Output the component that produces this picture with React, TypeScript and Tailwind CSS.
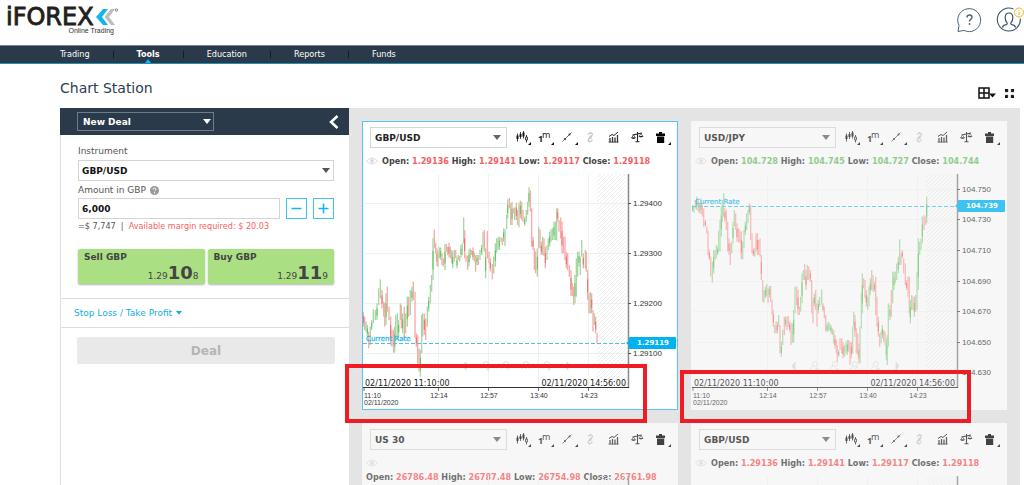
import React from "react";

type Tone = "up" | "down";

interface ChartSpec {
  candles: string;
  origin: [number, number];
  labels: { text: string; y: number }[];
  rate?: { text: string; y: number };
}

interface CardSpec {
  id: string;
  symbol: string;
  ohlc: [string, string, string, string];
  tone: Tone;
  active?: boolean;
  wrapped?: boolean;
  chart: ChartSpec;
  mark?: string;
}

// Each candle is "x high low direction", in thirds of a chart unit.
const GBP_CANDLES =
  "25 425 470 r;29 440 480 r;33 455 485 g;37 465 500 g;41 485 535 r;46 470 525 g;50 450 480 g;55 418 460 g;61 420 450 g;66 400 450 g;71 355 405 g;76 328 385 g;81 360 415 r;86 395 440 r;89 400 470 r;93 370 465 g;97 350 425 r;102 410 450 r;107 440 525 r;111 480 530 r;116 480 548 r;119 470 548 g;122 435 500 g;127 430 510 g;131 450 500 g;136 400 450 g;139 405 475 r;143 430 490 g;148 410 510 r;152 430 490 g;157 380 470 g;161 380 440 r;166 360 435 g;171 350 395 g;175 335 390 r;180 365 505 r;184 490 530 r;188 495 580 r;192 535 605 r;196 540 620 g;200 435 550 g;203 430 500 g;208 430 495 r;212 445 510 r;217 410 470 g;221 380 425 g;226 345 400 g;230 315 365 g;234 205 330 g;238 178 235 r;242 218 250 r;246 235 288 r;249 245 290 g;253 232 265 g;257 232 270 g;261 250 285 r;265 265 290 r;270 222 300 g;274 222 245 r;278 230 255 r;282 218 262 r;286 230 265 g;290 240 280 r;293 245 295 g;298 240 275 g;302 240 265 r;306 260 295 g;310 255 270 r;314 258 275 g;318 225 262 g;322 220 255 g;326 142 220 g;329 180 265 r;333 255 275 r;338 258 300 r;342 238 290 g;346 235 265 g;350 240 255 r;354 232 270 r;358 248 275 g;362 255 305 r;366 255 285 g;370 255 285 r;375 240 270 g;380 225 255 g;384 185 235 g;388 180 245 r;392 235 325 g;397 183 265 r;402 245 280 r;406 265 305 r;412 282 328 r;416 260 310 g;421 220 290 g;425 205 248 g;429 202 240 g;433 200 240 g;438 202 215 r;442 205 225 r;446 175 215 g;450 178 228 g;455 135 178 g;458 88 145 g;463 84 115 r;467 100 165 r;471 95 165 g;475 115 130 r;479 112 150 g;484 98 150 r;488 120 165 r;492 98 172 g;496 92 145 g;500 95 150 r;504 120 155 r;509 140 168 g;514 120 155 g;518 95 135 g;522 52 110 g;526 60 125 r;530 115 230 r;534 200 240 r;538 235 300 r;542 245 310 r;547 235 320 g;551 170 235 g;555 178 235 r;559 215 255 r;563 200 255 g;567 205 258 r;571 230 295 r;576 225 270 g;580 205 240 g;584 185 230 g;588 178 215 g;592 175 210 g;597 155 210 g;601 155 210 g;605 115 212 g;608 115 155 r;612 150 185 r;617 143 205 r;621 155 250 r;625 200 250 r;630 200 270 r;634 245 295 r;638 250 300 r;643 285 320 r;648 300 378 r;652 340 378 r;656 350 405 r;660 315 400 g;664 265 380 g;668 245 320 g;672 245 290 g;676 260 315 g;680 210 260 g;685 250 295 r;691 240 295 g;694 245 305 r;698 300 390 r;702 370 430 r;706 365 430 g;710 370 430 r;714 420 485 r;718 430 465 g;722 440 490 r;726 490 520 r";

const JPY_CANDLES =
  "38 -15 5 g;42 -10 8 g;46 -30 -5 g;50 -40 0 g;55 -30 5 r;59 -20 10 r;63 -35 12 g;67 -15 20 r;71 -5 50 r;76 30 50 r;80 50 70 r;84 62 135 r;88 118 150 r;92 140 200 r;97 155 218 g;101 120 190 g;105 120 150 g;109 105 145 g;113 110 135 g;116 62 125 g;120 30 125 g;124 -10 80 g;127 -30 35 g;131 -50 20 g;135 -5 35 r;139 0 60 r;143 35 125 r;147 85 135 r;151 100 165 r;155 95 130 g;159 35 100 g;163 0 50 g;167 10 60 r;171 40 95 r;176 55 98 r;180 62 98 r;184 65 148 r;188 95 148 g;192 60 115 g;196 35 75 g;200 10 60 g;204 0 40 g;208 -20 15 g;212 -15 90 r;216 70 130 r;220 115 138 r;224 115 140 g;228 70 125 r;232 70 135 r;236 90 135 r;240 85 140 r;244 135 210 r;248 210 275 r;252 240 278 g;256 230 265 g;260 222 260 g;264 235 278 r;268 228 262 g;272 228 275 r;276 270 315 r;280 300 350 r;284 345 370 r;288 335 370 g;292 335 370 r;296 315 350 g;300 345 430 r;304 395 440 g;308 360 405 g;313 320 375 r;317 320 350 g;321 320 360 r;325 318 350 r;329 335 365 r;333 340 405 r;337 340 398 g;341 300 398 g;345 230 310 g;350 230 285 r;354 240 315 r;358 290 315 r;362 260 305 g;366 190 280 g;370 180 210 g;374 162 210 r;378 180 240 r;382 165 210 g;386 170 210 r;391 180 215 r;395 210 310 r;399 265 340 r;403 250 290 g;407 240 300 r;411 280 350 r;415 270 310 g;419 260 290 g;425 238 285 g;429 280 305 r;433 290 325 r;437 315 365 r;441 340 365 g;445 335 365 g;449 340 360 g;453 345 370 g;457 355 375 r;461 360 400 g;465 375 415 r;469 390 430 r;472 405 455 r;476 420 440 g;480 385 420 r;485 385 430 r;489 395 445 r;494 405 440 g;498 395 430 g;502 390 435 g;506 390 425 r;510 395 465 r;514 395 445 r;518 350 430 g;521 305 350 g;525 315 380 r;529 355 430 r;533 370 435 r;537 400 460 r;540 350 460 g;544 250 355 g;547 190 310 g;551 205 235 r;555 210 265 r;559 240 290 r;563 260 300 g;567 230 290 g;571 205 255 g;575 180 240 r;579 195 245 g;583 215 245 r;587 200 315 r;591 260 350 r;595 320 380 r;599 370 410 r;603 365 400 g;607 345 385 g;611 360 395 r;615 365 405 r;619 385 450 g;622 375 465 g;625 280 410 g;630 285 330 g;634 240 320 r;638 185 280 g;642 185 240 g;646 185 220 g;650 160 210 g;655 140 190 g;659 88 165 g;663 130 165 r;667 120 145 r;671 145 190 r;676 160 225 r;680 210 240 r;684 200 260 r;688 200 310 r;691 270 340 g;695 255 300 g;699 260 300 r;703 260 320 g;707 255 305 r;711 185 300 g;715 85 240 g;719 95 135 g;723 85 120 g;727 20 100 g;732 15 60 r;736 20 45 r;740 -40 40 g";

const GBP_LABELS = [
  { text: "1.29400", y: 35 },
  { text: "1.29300", y: 85 },
  { text: "1.29200", y: 135 },
  { text: "1.29100", y: 185 },
];

const CARDS: CardSpec[] = [
  {
    id: "gbpusd-1",
    symbol: "GBP/USD",
    ohlc: ["1.29136", "1.29141", "1.29117", "1.29118"],
    tone: "down",
    active: true,
    chart: {
      candles: GBP_CANDLES,
      origin: [-8, 2],
      labels: GBP_LABELS,
      rate: { text: "1.29119", y: 175 },
    },
    mark: "-left-[18px] top-[242px] h-[59px] w-[302px]",
  },
  {
    id: "usdjpy",
    symbol: "USD/JPY",
    ohlc: ["104.728", "104.745", "104.727", "104.744"],
    tone: "up",
    chart: {
      candles: JPY_CANDLES,
      origin: [-12, 42],
      labels: [
        { text: "104.750", y: 21 },
        { text: "104.730", y: 51 },
        { text: "104.710", y: 82 },
        { text: "104.690", y: 113 },
        { text: "104.670", y: 143 },
        { text: "104.650", y: 174 },
        { text: "104.630", y: 204 },
      ],
      rate: { text: "104.739", y: 38 },
    },
    mark: "-left-[12px] top-[248px] h-[53px] w-[291px]",
  },
  {
    id: "us30",
    symbol: "US 30",
    ohlc: ["26786.48", "26787.48", "26754.98", "26761.98"],
    tone: "down",
    wrapped: true,
    chart: { candles: "", origin: [0, 0], labels: [] },
  },
  {
    id: "gbpusd-2",
    symbol: "GBP/USD",
    ohlc: ["1.29136", "1.29141", "1.29117", "1.29118"],
    tone: "down",
    chart: { candles: GBP_CANDLES, origin: [-8, 2], labels: GBP_LABELS },
  },
];

function Caret({ className }: { className: string }) {
  return (
    <svg viewBox="0 0 8 5" className={className} aria-hidden="true">
      <path d="M0 0h8L4 5z" fill="currentColor" />
    </svg>
  );
}

function Corner({ x }: { x: number }) {
  return <path d={`M${x + 2} 15v3h-3z`} fill="#111" />;
}

const TOOLS: { name: string; art: React.ReactNode }[] = [
  {
    name: "Chart type",
    art: (
      <>
        <path
          d="M6.5 6.500v8M9.500 5v7M12.500 4v7.500M15.500 8v7.500"
          stroke="#111"
          strokeWidth="0.800"
        />
        <path d="M5.500 8.500h2v3.500h-2zM8.500 7h2v3h-2zM11.500 5.500h2v4h-2z" fill="#111" />
        <path d="M14.600 10h1.800v3h-1.800z" fill="#fff" stroke="#111" strokeWidth="0.800" />
        <Corner x={18} />
      </>
    ),
  },
  {
    name: "Timeframe",
    art: (
      <>
        <text x="4" y="15" fontSize="9" fontWeight="700" fill="#222" fontFamily="Noto Sans, sans-serif">
          1
        </text>
        <text x="8" y="11" fontSize="9" fill="#222" fontFamily="Noto Sans, sans-serif">
          m
        </text>
        <Corner x={18} />
      </>
    ),
  },
  {
    name: "Draw line",
    art: (
      <>
        <path d="M5.500 14.500l9-9" stroke="#444" strokeWidth="0.800" />
        <circle cx="8" cy="12" r="1" fill="#333" />
        <circle cx="12.500" cy="7.500" r="1" fill="#333" />
        <Corner x={19} />
      </>
    ),
  },
  {
    name: "Link",
    art: (
      <g fill="none" stroke="#c4c4c4" strokeWidth="1.200">
        <path d="M8 7.500l2.500-2 2 1.500-1 2.500-2.500 1" />
        <path d="M12 11l-3 .500-1 2 1.500 1.500L12.500 13" />
        <path d="M9 11.500l2.500-3" />
      </g>
    ),
  },
  {
    name: "Indicators",
    art: (
      <>
        <path d="M6 9.500l3-2 2 1 4-3.500" fill="none" stroke="#222" strokeWidth="1" />
        <path d="M7 11v4.500M9.500 10v5.500M12 10.500v5M14.500 8v7.500" stroke="#333" strokeWidth="1.300" />
        <path d="M5.500 15h10" stroke="#333" strokeWidth="0.800" />
      </>
    ),
  },
  {
    name: "Compare",
    art: (
      <>
        <path d="M6.500 8l9.500-2M11.500 5v9.500M9.500 14.800h4" stroke="#222" strokeWidth="1.100" fill="none" />
        <path d="M7.500 8l-2 3h4zM15 6.500l-2 3h4z" fill="none" stroke="#333" strokeWidth="0.700" />
        <path d="M5.300 10.500h4.400q-2.200 2.800-4.400 0zM12.800 9h4.400q-2.200 2.800-4.400 0z" fill="#222" />
      </>
    ),
  },
  {
    name: "Delete",
    art: (
      <>
        <path d="M7 6.500h3v-1.500h3v1.500h3v2.500h-9zM8 9.500h7.200v6.500h-7.200z" fill="#050505" />
        <Corner x={20} />
      </>
    ),
  },
];

function Zoomer({ x, sign }: { x: number; sign: string }) {
  return (
    <g>
      <circle cx={x + 1} cy="196" r="2.500" />
      <path d={`M${x - 1} 198l-3 3`} />
      <path d={sign} transform={`translate(${x + 3} 201)`} />
    </g>
  );
}

function PriceChart({ spec, id }: { spec: ChartSpec; id: string }) {
  const bars = spec.candles ? spec.candles.split(";").map((c) => c.split(" ")) : [];
  return (
    <svg viewBox="0 0 314 241" className="block w-full" role="img" aria-label="Price chart">
      <defs>
        <pattern id={`hatch-${id}`} width="4" height="4" patternUnits="userSpaceOnUse">
          <path d="M-1 5L5 -1M-1 1L1 -1M3 5L5 3" stroke="#e8e8e8" strokeWidth="0.800" />
        </pattern>
      </defs>
      <rect x="234" y="6" width="31" height="213" fill={`url(#hatch-${id})`} />
      <g stroke="#f0f0f0">
        {[75.5, 125.5, 175.5, 225.5].map((x) => (
          <path key={x} d={`M${x} 6V219`} />
        ))}
        {spec.labels.map((l) => (
          <path key={l.y} d={`M1 ${l.y + 0.5}H265`} />
        ))}
      </g>
      <g fill="none" stroke="#d8d8d8" strokeWidth="0.800">
        <path d="M103 194l-3 4 3 4zM204 194l3 4-3 4z" fill="#d8d8d8" />
        <Zoomer x={122} sign="M-2 0h4M0 -2v4" />
        <Zoomer x={142} sign="M-2 0h4" />
        <Zoomer x={162} sign="M-2 0l2-2 2 2" />
        <Zoomer x={183} sign="M-2 0h4M0 -2v4" />
      </g>
      <g transform={`translate(${spec.origin[0]} ${spec.origin[1]}) scale(0.33333)`}>
        {bars.map(([x, top, bottom, dir], i) => {
          const t = Number(top);
          const h = Number(bottom) - t;
          const up = dir === "g";
          return (
            <g key={i}>
              <rect x={Number(x) - 2} y={t} width="4" height={h} fill={up ? "#a5d8a3" : "#fba9a9"} />
              {i % 3 === 0 && (
                <rect
                  x={Number(x) - 1.5}
                  y={t + h * 0.3}
                  width="3"
                  height={h * 0.45}
                  fill={up ? "#5fbf5c" : "#f06a66"}
                />
              )}
            </g>
          );
        })}
      </g>
      <path d="M265.500 6V220" stroke="#8a8a8a" strokeWidth="1.500" />
      <path d="M0 219.500H266" stroke="#333" />
      <path d="M1 220v3M75.500 220v3M125.500 220v3M175.500 220v3M225.500 220v3" stroke="#777" />
      <g fontFamily="Liberation Sans, sans-serif" fontSize="8" fill="#333">
        {spec.labels.map((l) => (
          <g key={l.text}>
            <path d={`M265 ${l.y + 0.5}h3`} stroke="#555" />
            <text x="270" y={l.y + 3}>
              {l.text}
            </text>
          </g>
        ))}
      </g>
      <g fontFamily="Liberation Sans, sans-serif" fontSize="7" fill="#333">
        <text x="1" y="230">11:10</text>
        <text x="1" y="237">02/11/2020</text>
        <g textAnchor="middle">
          <text x="76" y="230">12:14</text>
          <text x="126" y="230">12:57</text>
          <text x="176" y="230">13:40</text>
          <text x="226" y="230">14:23</text>
        </g>
      </g>
      <g fontFamily="DejaVu Sans, sans-serif" fontSize="8" fill="#222">
        <text x="2" y="218">02/11/2020 11:10:00</text>
        <text x="263" y="218" textAnchor="end">
          02/11/2020 14:56:00
        </text>
      </g>
      {spec.rate && (
        <g fontFamily="DejaVu Sans, sans-serif">
          <path d={`M0 ${spec.rate.y + 0.5}H265`} stroke="#4fc0e0" strokeDasharray="4 2" />
          <text x="3" y={spec.rate.y - 2} fontSize="7" fill="#12b3e6" stroke="#12b3e6" strokeWidth="0.200">
            Current Rate
          </text>
          <path d={`M263 ${spec.rate.y}l4-3v6z`} fill="#00b2f0" />
          <rect x="266" y={spec.rate.y - 6} width="47" height="12" rx="1" fill="#00b2f0" />
          <text x="290" y={spec.rate.y + 2} fontSize="7" fontWeight="700" fill="#fff" textAnchor="middle">
            {spec.rate.text}
          </text>
        </g>
      )}
    </svg>
  );
}

function ChartCard({ card }: { card: CardSpec }) {
  const names = ["Open", "High", "Low", "Close"];
  return (
    <section
      aria-label={card.symbol}
      className={`relative border ${card.active ? "border-[#55c8ee] bg-white" : "border-[#f7f7f7] bg-[#f7f7f7]"}`}
    >
      <div className={card.active ? "pt-[5px]" : "pt-[5px] opacity-75"}>
        <div className="flex items-center gap-1 pr-[5px] pl-[7px]">
          <div className="grid min-w-0 flex-1 items-center">
            <select
              aria-label="Chart instrument"
              defaultValue={card.symbol}
              className="col-start-1 row-start-1 h-[21px] w-full appearance-none border border-[#d4d4d4] bg-transparent px-1 text-[9px] leading-[12px] font-bold text-[#222]"
            >
              <option>{card.symbol}</option>
            </select>
            <Caret className="pointer-events-none col-start-1 row-start-1 mr-[6px] w-2 justify-self-end text-[#666]" />
          </div>
          <div className="flex shrink-0">
            {TOOLS.map((tool) => (
              <button key={tool.name} type="button" aria-label={tool.name} className="h-[21px] w-[23px]">
                <svg viewBox="0 0 23 21" className="block size-full">
                  {tool.art}
                </svg>
              </button>
            ))}
          </div>
        </div>
        <div
          className={`mt-[6px] flex items-center gap-x-1 pl-[3px] font-['DejaVu_Sans_Condensed','DejaVu_Sans',sans-serif] text-[9px] leading-[14px] font-bold whitespace-nowrap text-[#444] ${card.wrapped ? "-mb-[14px] flex-wrap" : ""}`}
        >
          <svg viewBox="0 -3 12 14" className="h-[14px] w-3 shrink-0" aria-hidden="true">
            <path d="M0.500 4Q6 -2 11.500 4Q6 10 0.500 4z" fill="none" stroke="#dcdcdc" />
            <circle cx="6" cy="4" r="2" fill="#dcdcdc" />
          </svg>
          <p className={card.wrapped ? "w-full" : ""}>
            {names.map((name, i) => (
              <React.Fragment key={name}>
                {name}:{" "}
                <span className={card.tone === "up" ? "text-[#6dc068]" : "text-[#f4605f]"}>{card.ohlc[i]}</span>{" "}
              </React.Fragment>
            ))}
          </p>
        </div>
        <PriceChart spec={card.chart} id={card.id} />
      </div>
      {card.mark && <div className={`pointer-events-none absolute z-10 border-4 border-[#ee1c25] ${card.mark}`} />}
    </section>
  );
}

function Quote({ side, lead, big, tail }: { side: string; lead: string; big: string; tail: string }) {
  return (
    <button
      type="button"
      className="flex h-[35px] flex-1 flex-col items-start justify-between rounded-[2px] bg-[#aae083] px-[6px] pt-[2px] text-[#444] shadow-[0_1px_2px_rgba(0,0,0,0.3)]"
    >
      <span className="text-[9px] leading-[12px] font-bold">{side}</span>
      <span className="flex items-baseline self-end text-[9px] leading-[20px]">
        {lead}
        <b className="text-[18px]">{big}</b>
        {tail}
      </span>
    </button>
  );
}

function DealPanel() {
  return (
    <aside className="w-[289px] shrink-0 border-l border-[#e0e0e0] bg-white text-[9px] leading-[12px] text-[#555]">
      <div className="-ml-px flex h-[27px] items-center justify-between bg-[#2a3a4a] pr-[10px] pl-[17px]">
        <div className="grid w-[137px] items-center text-white">
          <select
            aria-label="Deal type"
            className="col-start-1 row-start-1 h-[19px] w-full appearance-none border border-[#6d7c89] bg-[#2a3a4a] px-[5px] font-bold text-white"
          >
            <option>New Deal</option>
          </select>
          <Caret className="pointer-events-none col-start-1 row-start-1 mr-[3px] w-2 justify-self-end" />
        </div>
        <button type="button" aria-label="Collapse panel" className="text-white">
          <svg viewBox="0 0 10 14" className="w-[10px]">
            <path d="M8.500 1L2 7l6.500 6" fill="none" stroke="currentColor" strokeWidth="2.500" />
          </svg>
        </button>
      </div>
      <div className="border-b border-[#ddd] pt-[10px] pr-[15px] pb-[14px] pl-[17px]">
        <label htmlFor="instrument" className="block">
          Instrument
        </label>
        <div className="mt-[3px] grid items-center">
          <select
            id="instrument"
            className="col-start-1 row-start-1 h-[21px] w-full appearance-none border border-[#d4d4d4] bg-white px-[3px] font-bold text-[#111]"
          >
            <option>GBP/USD</option>
          </select>
          <Caret className="pointer-events-none col-start-1 row-start-1 mr-1 w-2 justify-self-end" />
        </div>
        <div className="mt-[3px] flex items-center gap-1">
          <label htmlFor="amount">Amount in GBP</label>
          <svg viewBox="0 0 10 10" className="size-[9px]" role="img" aria-label="Help">
            <circle cx="5" cy="5" r="5" fill="#999" />
            <path d="M3.400 3.900q0-1.600 1.600-1.600t1.600 1.400q0 .800-1.600 1.900" fill="none" stroke="#fff" strokeWidth="1.100" />
            <circle cx="5" cy="7.500" r="0.700" fill="#fff" />
          </svg>
        </div>
        <div className="mt-[2px] flex gap-[6px]">
          <input
            id="amount"
            defaultValue="6,000"
            className="h-[21px] min-w-0 flex-1 border border-[#d4d4d4] px-[3px] font-bold text-[#111]"
          />
          <button type="button" aria-label="Decrease amount" className="size-[21px] border border-[#3cc4f2] text-[#15b2ee]">
            <svg viewBox="0 0 19 19" className="block size-full">
              <path d="M4.500 9.500h10" stroke="currentColor" strokeWidth="1.500" />
            </svg>
          </button>
          <button type="button" aria-label="Increase amount" className="size-[21px] border border-[#3cc4f2] text-[#15b2ee]">
            <svg viewBox="0 0 19 19" className="block size-full">
              <path d="M4.500 9.500h10M9.500 4.500v10" stroke="currentColor" strokeWidth="1.500" />
            </svg>
          </button>
        </div>
        <p className="mt-px font-['DejaVu_Sans_Condensed','DejaVu_Sans',sans-serif] whitespace-pre">
          =$ 7,747 {" | "} <span className="text-[#f8625f]">Available margin required: $ 20.03</span>
        </p>
        <div className="mt-[17px] flex gap-[3px]">
          <Quote side="Sell GBP" lead="1.29" big="10" tail="8" />
          <Quote side="Buy GBP" lead="1.29" big="11" tail="9" />
        </div>
      </div>
      <div className="border-b border-[#ddd] px-[13px] py-2">
        <button type="button" className="flex items-center gap-1 text-[#16aee0]">
          Stop Loss / Take Profit
          <Caret className="w-[6px]" />
        </button>
      </div>
      <div className="py-[9px] pr-[14px] pl-4">
        <button type="button" disabled className="h-[27px] w-full rounded-[2px] bg-[#e9e9e9] text-[12px] font-bold text-[#b5b5b5]">
          Deal
        </button>
      </div>
    </aside>
  );
}

function Logo() {
  return (
    <a href="#" aria-label="iFOREX Online Trading" className="block">
      <svg viewBox="0 -6 114 36" className="block w-[114px]">
        <text
          x="-1"
          y="18"
          fontSize="24"
          fill="#231f20"
          stroke="#231f20"
          strokeWidth="0.900"
          fontFamily="DejaVu Sans, sans-serif"
        >
          iFOREX
        </text>
        <path d="M101 2h-5l-7 8 7 8h5l-6-8z" fill="#12b5ee" />
        <path d="M108 2h-4l-6.500 8 6.500 8h4l-6-8z" fill="#bdbdbd" />
        <circle cx="109.500" cy="3" r="1.200" fill="none" stroke="#555" strokeWidth="0.700" />
        <text x="107" y="26" fontSize="7" fill="#333" textAnchor="end" fontFamily="Liberation Sans, sans-serif">
          Online Trading
        </text>
      </svg>
    </a>
  );
}

const NAV = ["Trading", "Tools", "Education", "Reports", "Funds"];

export default function App() {
  return (
    <div className="flex h-screen flex-col overflow-hidden bg-white font-['DejaVu_Sans',sans-serif]">
      <header className="flex h-[45px] shrink-0 items-start justify-between pt-px pl-[7px]">
        <Logo />
        <div className="flex gap-[14px] pt-[6px]">
          <button type="button" aria-label="Help chat">
            <svg viewBox="0 0 26 26" className="size-[26px]" fill="none" stroke="#50657a" strokeWidth="1">
              <path d="M2 24.500l1-6A11.500 11.500 0 1 1 8 23.400z" strokeLinejoin="round" />
              <path d="M11 10.500q0-2.500 2.500-2.500t2.500 2.300q0 1.200-1.300 2t-1.300 2.200" strokeWidth="1.400" />
              <circle cx="13.500" cy="17" r="0.900" fill="#50657a" stroke="none" />
            </svg>
          </button>
          <button type="button" aria-label="Account">
            <svg viewBox="0 0 28 26" className="h-[26px] w-7" fill="none" stroke="#3d5468">
              <path d="M17.500 2A11.500 11.500 0 1 0 24.300 11.500" strokeWidth="1.100" />
              <path
                d="M6.500 20.500q.500-2.300 3.500-2.800 1.800-.500 1-1.900-1.800-2-1.800-5Q9.200 6 13 6t3.800 4.800q0 3-1.800 5-.800 1.400 1 1.900 3 .500 3.500 2.800"
                strokeWidth="1.200"
              />
              <circle cx="23" cy="5.500" r="4.500" fill="#fff" stroke="#f0b429" />
              <path d="M23 5v3M23 3v1" stroke="#f0b429" />
            </svg>
          </button>
        </div>
      </header>

      <nav aria-label="Main" className="h-[19px] shrink-0 border-t border-b border-t-[#7c868e] border-b-[#1c8fbb] bg-[#2a3a4a]">
        <ul className="flex h-full items-center pl-[37px] font-['DejaVu_Sans_Condensed','DejaVu_Sans',sans-serif] text-[9px] leading-[17px] text-white">
          {NAV.map((item, i) => (
            <li key={item} className="flex items-center">
              {i > 0 && <span className="h-[7px] w-px bg-[#111c26]" />}
              <a href="#" className={`relative px-[23px] ${item === "Tools" ? "font-bold" : ""}`}>
                {item}
                {item === "Tools" && (
                  <svg viewBox="0 0 6 4" className="absolute bottom-0 left-1/2 w-[6px] -translate-x-1/2">
                    <path d="M3 0l3 4H0z" fill="#14b4ee" />
                  </svg>
                )}
              </a>
            </li>
          ))}
        </ul>
      </nav>

      <main className="flex min-h-0 flex-1 flex-col pr-1 pl-[60px]">
        <div className="flex h-[44px] shrink-0 items-start justify-between pt-[14px] pr-[5px]">
          <h1 className="text-[14px] leading-[20px] text-[#2b4052]">Chart Station</h1>
          <div className="flex items-center gap-2 pt-[9px]">
            <button type="button" aria-label="Layout">
              <svg viewBox="0 0 18 12" className="block w-[18px]">
                <path d="M1 1h10v10H1zM6 1v10M1 6h10" fill="none" stroke="#111" strokeWidth="1.500" />
                <path d="M11 6.500h7l-3.500 4z" fill="#111" />
              </svg>
            </button>
            <button type="button" aria-label="Full screen">
              <svg viewBox="0 0 11 11" className="block w-[11px]" fill="#111">
                <path d="M1 1h3.500L3.600 1.900l1 1-1.600 1.600-1.100-1L1 4.500zM10 1v3.500l-.900-.900-1.100 1L6.500 3l1-1.100L6.500 1zM1 10V6.500l.900.900 1.100-1L4.500 8l-1 1.100.900.900zM10 10H6.500l.900-.900-1-1.100L8 6.500l1.100 1L10 6.500z" />
              </svg>
            </button>
          </div>
        </div>

        <div className="flex min-h-0 flex-1">
          <DealPanel />
          <div className="grid flex-1 grid-cols-2 content-start gap-[13px] bg-[#e4e4e4] p-[13px]">
            {CARDS.map((card) => (
              <ChartCard key={card.id} card={card} />
            ))}
          </div>
        </div>
      </main>
    </div>
  );
}
